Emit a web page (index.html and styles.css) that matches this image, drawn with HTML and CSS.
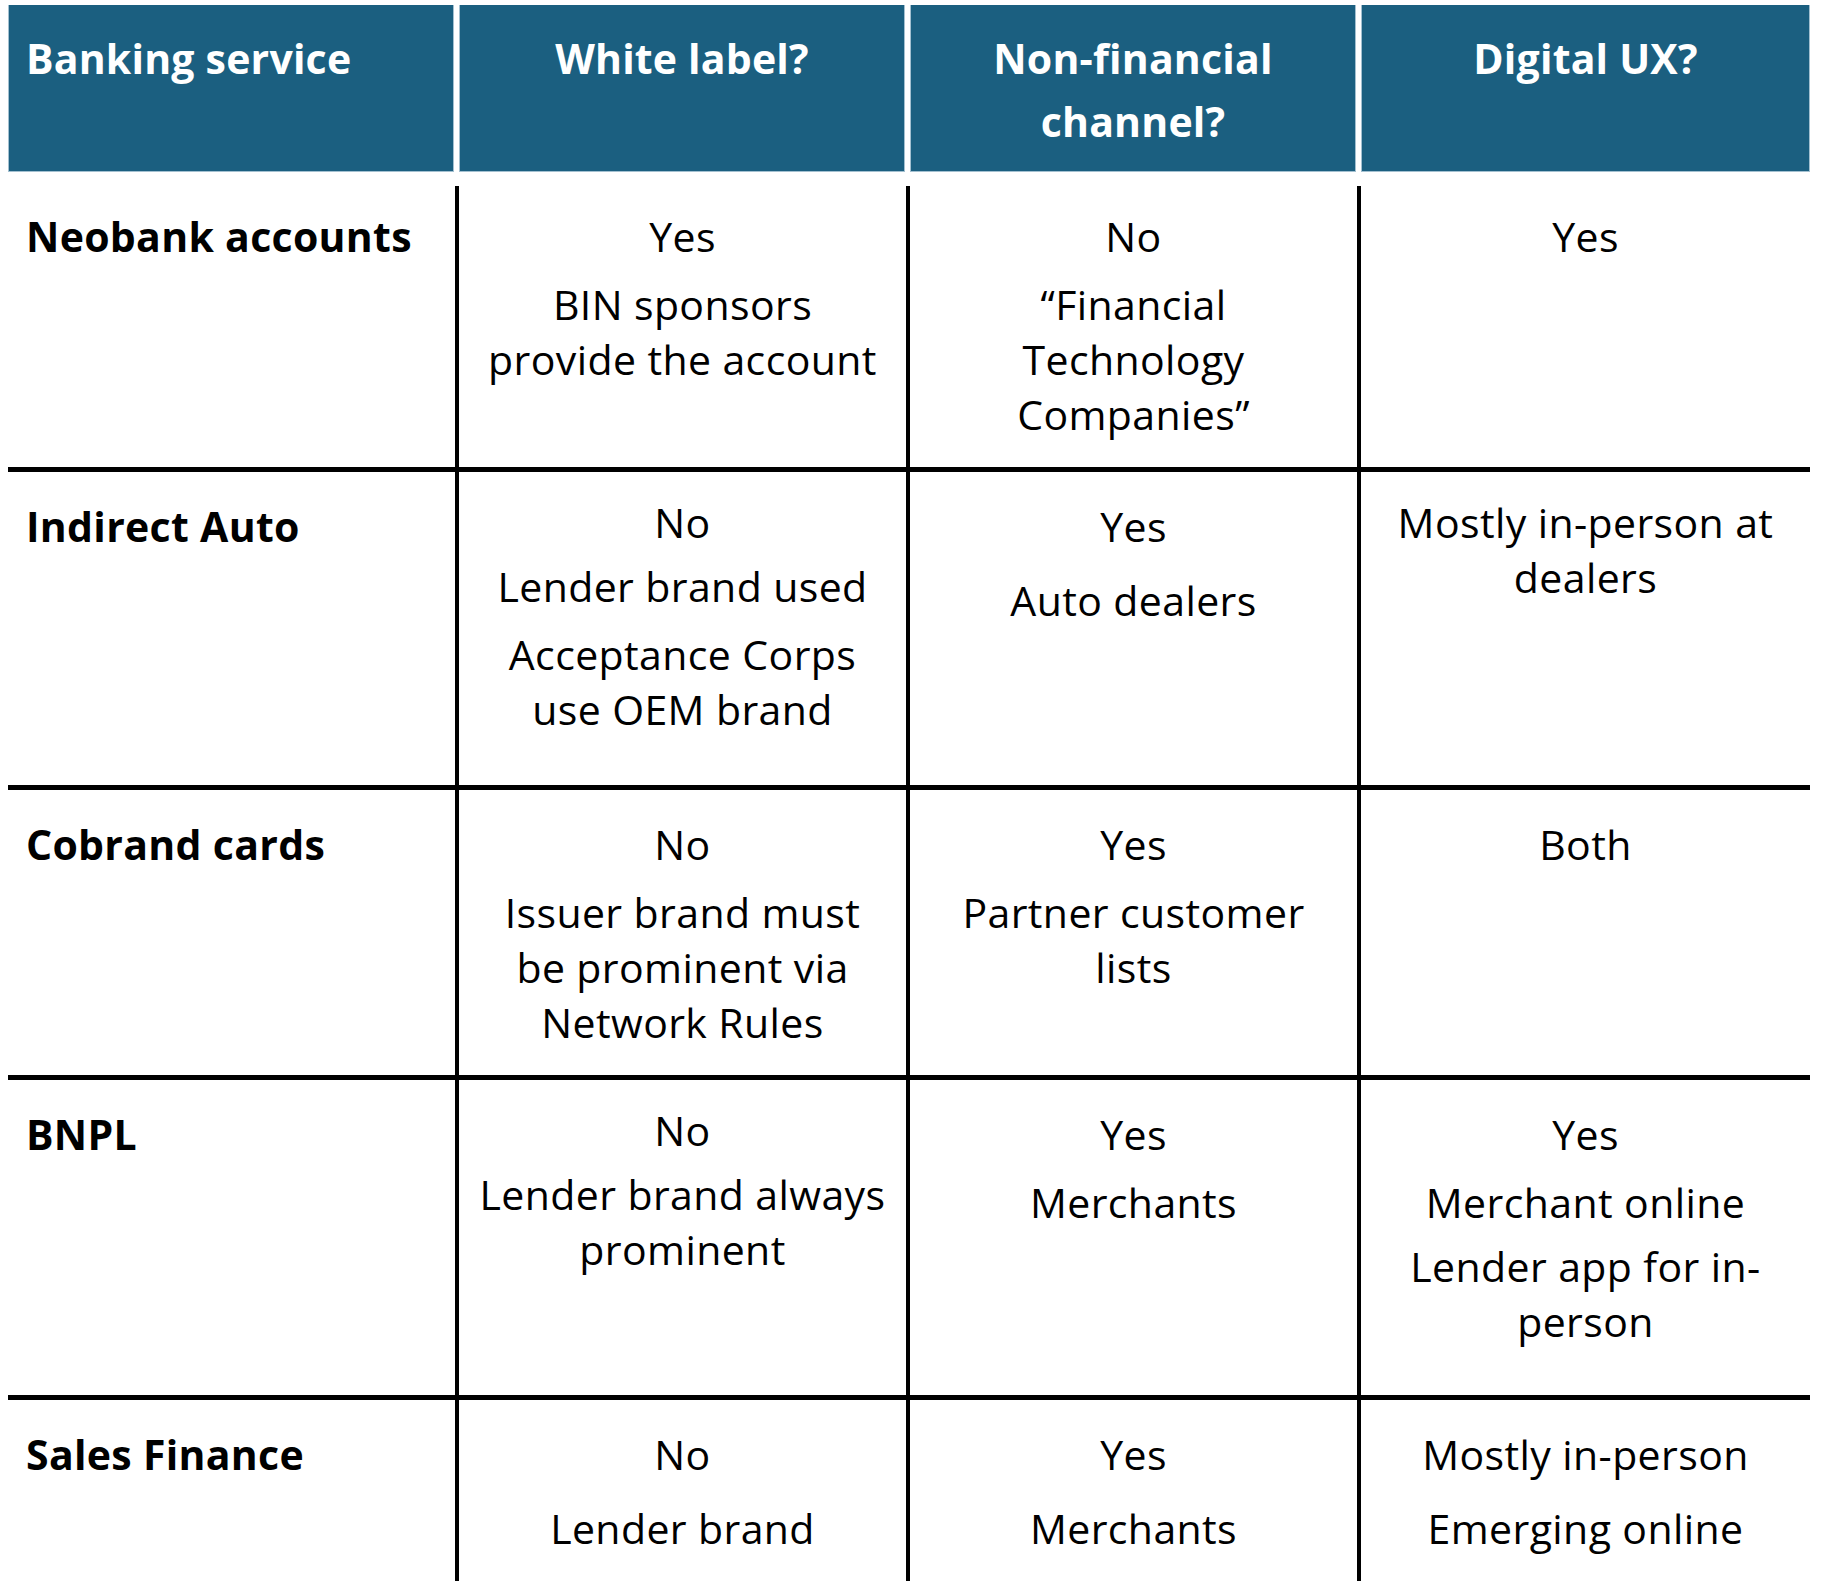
FILE: index.html
```html
<!DOCTYPE html>
<html lang="en">
<head>
<meta charset="utf-8">
<title>Banking services</title>
<link rel="stylesheet" href="styles.css">
</head>
<body>
<div class="table">
  <div class="head">
    <div class="hcell first">Banking service</div>
    <div class="hcell">White label?</div>
    <div class="hcell">Non-financial<br>channel?</div>
    <div class="hcell last">Digital UX?</div>
  </div>

  <div class="row r1">
    <div class="cell name">Neobank accounts</div>
    <div class="cell"><p>Yes</p><p>BIN sponsors<br>provide the account</p></div>
    <div class="cell"><p>No</p><p>“Financial<br>Technology<br>Companies”</p></div>
    <div class="cell last"><p>Yes</p></div>
  </div>

  <div class="row r2">
    <div class="cell name down">Indirect Auto</div>
    <div class="cell"><p>No</p><p class="gs">Lender brand used</p><p>Acceptance Corps<br>use OEM brand</p></div>
    <div class="cell down"><p>Yes</p><p class="gl">Auto dealers</p></div>
    <div class="cell last"><p>Mostly in-person at<br>dealers</p></div>
  </div>

  <div class="row r3">
    <div class="cell name down">Cobrand cards</div>
    <div class="cell down"><p>No</p><p>Issuer brand must<br>be prominent via<br>Network Rules</p></div>
    <div class="cell down"><p>Yes</p><p>Partner customer<br>lists</p></div>
    <div class="cell last down"><p>Both</p></div>
  </div>

  <div class="row r4">
    <div class="cell name down">BNPL</div>
    <div class="cell"><p>No</p><p class="gs">Lender brand always<br>prominent</p></div>
    <div class="cell down"><p>Yes</p><p>Merchants</p></div>
    <div class="cell last down"><p>Yes</p><p>Merchant online</p><p class="gs">Lender app for in-<br>person</p></div>
  </div>

  <div class="row r5">
    <div class="cell name down">Sales Finance</div>
    <div class="cell down"><p>No</p><p class="gl">Lender brand</p></div>
    <div class="cell down"><p>Yes</p><p class="gl">Merchants</p></div>
    <div class="cell last down"><p>Mostly in-person</p><p class="gl">Emerging online</p></div>
  </div>
</div>
</body>
</html>
```

FILE: styles.css
```css
html, body {
  margin: 0;
  padding: 0;
  background: #ffffff;
}

body {
  font-family: "Open Sans", "Liberation Sans", sans-serif;
  color: #000000;
}

.table {
  width: 1802px;
  margin: 5px 0 0 8px;
}

.head {
  display: grid;
  grid-template-columns: 451px 451px 451px 449px;
  height: 167px;
}

.hcell {
  box-sizing: border-box;
  background: #1b5f80;
  background-clip: padding-box;
  border-right: 5px solid #ffffff;
  box-shadow: inset -1px 0 0 #a3c0d0, inset 1px 0 0 #a3c0d0, inset 0 -1px 0 #a3c0d0;
  color: #ffffff;
  font-weight: 700;
  font-size: 41px;
  letter-spacing: 0.2px;
  line-height: 63px;
  text-align: center;
  padding-top: 22px;
}

.hcell.first {
  text-align: left;
  padding-left: 18px;
}

.hcell.last {
  border-right: none;
}

.row {
  display: grid;
  grid-template-columns: 451px 451px 451px 449px;
  box-sizing: border-box;
  border-top: 5px solid #000000;
}

.row.r1 {
  border-top: none;
  margin-top: 14px;
  height: 281px;
}

.row.r2 { height: 318px; }
.row.r3 { height: 290px; }
.row.r4 { height: 320px; }
.row.r5 { height: 186px; }

.cell {
  box-sizing: border-box;
  border-right: 4px solid #000000;
  font-size: 41px;
  letter-spacing: 0.4px;
  line-height: 55px;
  text-align: center;
  padding-top: 23px;
}

.cell.last {
  border-right: none;
}

.cell.down {
  padding-top: 27px;
}

.cell.name {
  text-align: left;
  font-weight: 700;
  letter-spacing: 0.3px;
  padding-left: 18px;
}

.cell p {
  margin: 13px 0 0 0;
}

.cell p:first-child {
  margin-top: 0;
}

.cell p.gs {
  margin-top: 9px;
}

.cell p.gl {
  margin-top: 19px;
}
```
